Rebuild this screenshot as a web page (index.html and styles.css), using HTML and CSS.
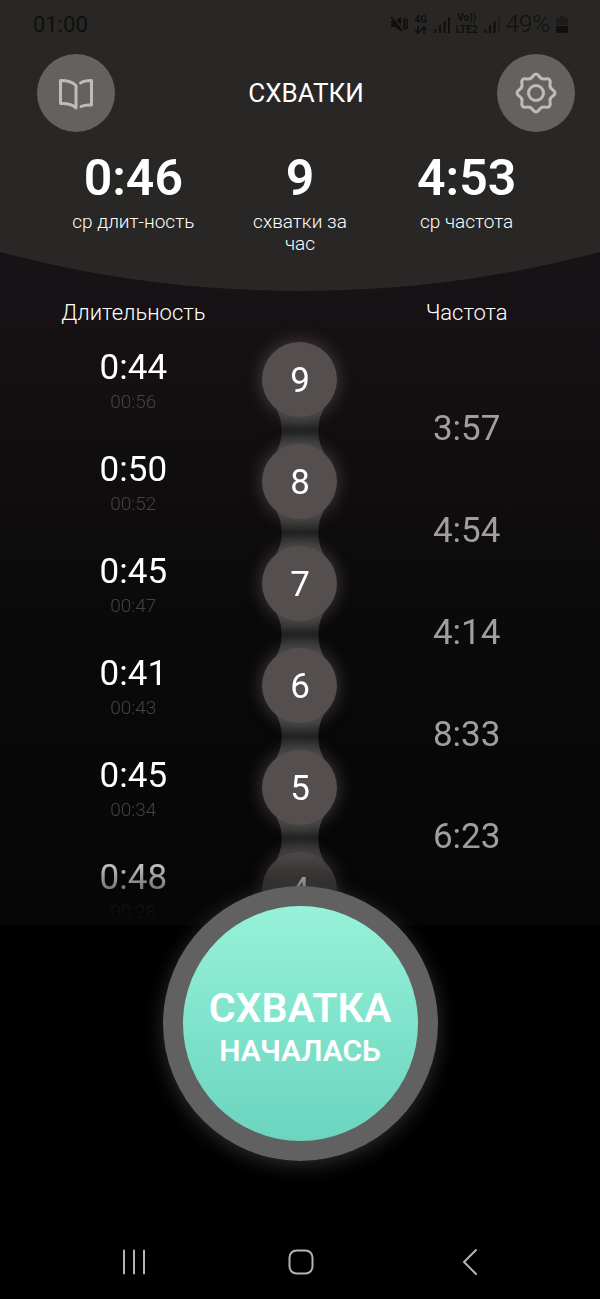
FILE: index.html
```html
<!DOCTYPE html>
<html lang="ru">
<head>
<meta charset="utf-8">
<meta name="viewport" content="width=device-width, initial-scale=1">
<title>Схватки</title>
<link rel="stylesheet" href="styles.css">
</head>
<body>
<svg class="defs" aria-hidden="true">
  <defs>
    <linearGradient id="neck-fill" x1="0" y1="0" x2="0" y2="1">
      <stop offset="0" stop-color="#444443"/>
      <stop offset="0.25" stop-color="#383938"/>
      <stop offset="0.5" stop-color="#1f2120"/>
      <stop offset="0.75" stop-color="#383938"/>
      <stop offset="1" stop-color="#444443"/>
    </linearGradient>
    <path id="neck" d="M8 0C14 10 15.500 16 15.500 25.500S14 41 8 51H60C54 41 52.500 35 52.500 25.500S54 10 60 0Z" fill="url(#neck-fill)"/>
    <path id="tooth" d="M-5.900 -14.300C-2.700 -15.600 -3 -19 0 -19S2.700 -15.600 5.900 -14.300"/>
  </defs>
</svg>
<div class="app">
  <header class="header">
    <div class="status">
      <span class="clock">01:00</span>
      <div class="indicators">
        <svg class="mute" width="18" height="18" viewBox="0 0 18 18" aria-hidden="true"><path d="M1 6h4l6-4v14l-6-4H1z" fill="currentColor"/><path d="M2.500 1l11 14" stroke="#282725" stroke-width="1.500"/><path d="M1 2l11 14" stroke="currentColor" stroke-width="1.500"/><path d="M13.500 3l1.500 2-1.500 2 1.500 2-1.500 2 1.500 2-1.500 2M17 4v10" fill="none" stroke="currentColor" stroke-width="1.500"/></svg>
        <span class="network"><span>4G</span><svg width="14" height="8" viewBox="0 0 14 8" aria-hidden="true"><path d="M4 0v7M1 4l3 3 3-3M10 8V1M7 4l3-3 3 3" fill="none" stroke="currentColor" stroke-width="1.500"/></svg></span>
        <svg width="16" height="17" viewBox="0 0 16 17" aria-hidden="true"><path d="M1.500 17v-4M6 17V9M10.500 17V5M15 17V1" stroke="currentColor" stroke-width="2"/></svg>
        <span class="network"><span>Vo))</span><span>LTE2</span></span>
        <svg width="16" height="17" viewBox="0 0 16 17" aria-hidden="true"><path d="M1.500 17v-4M6 17V9M10.500 17V5" stroke="currentColor" stroke-width="2"/><path d="M15 17V1" stroke="#1e1d1c" stroke-width="2"/></svg>
        <span class="battery">49%</span>
        <svg width="12" height="17" viewBox="0 0 12 17" aria-hidden="true"><path d="M4 0h4v2h2q2 0 2 2v5H0V4q0-2 2-2h2z" fill="#1c1b1a"/><path d="M0 10h12v5q0 2-2 2H2q-2 0-2-2z" fill="currentColor"/></svg>
      </div>
    </div>
    <div class="topbar">
      <button class="round" type="button" aria-label="Справка">
        <svg width="36" height="36" viewBox="-18 -18 36 36" aria-hidden="true"><path d="M-15.500 -12.500Q-5 -12.500 0 -7.500V15Q-5 10 -15.500 10.500ZM4.500 -10Q8 -12.500 15.500 -12.500V12Q9 11.500 5 13.500"/></svg>
      </button>
      <h1 class="title">СХВАТКИ</h1>
      <button class="round" type="button" aria-label="Настройки">
        <svg width="44" height="44" viewBox="-22 -22 44 44" aria-hidden="true"><use href="#tooth"/><use href="#tooth" transform="rotate(45)"/><use href="#tooth" transform="rotate(90)"/><use href="#tooth" transform="rotate(135)"/><use href="#tooth" transform="rotate(180)"/><use href="#tooth" transform="rotate(225)"/><use href="#tooth" transform="rotate(270)"/><use href="#tooth" transform="rotate(315)"/><circle r="7.500"/></svg>
      </button>
    </div>
    <dl class="stats">
      <div class="stat"><dt>ср длит-ность</dt><dd>0:46</dd></div>
      <div class="stat"><dt>схватки за час</dt><dd>9</dd></div>
      <div class="stat"><dt>ср частота</dt><dd>4:53</dd></div>
    </dl>
  </header>

  <table class="log">
    <thead>
      <tr class="heads"><th>Длительность</th><td></td><th>Частота</th></tr>
    </thead>
    <tbody class="rows">
      <tr class="row"><td class="length">0:44<small>00:56</small></td><td class="link"><span class="bead">9</span><svg class="neck" width="68" height="51" aria-hidden="true"><use href="#neck"/></svg></td><td class="interval">3:57</td></tr>
      <tr class="row"><td class="length">0:50<small>00:52</small></td><td class="link"><span class="bead">8</span><svg class="neck" width="68" height="51" aria-hidden="true"><use href="#neck"/></svg></td><td class="interval">4:54</td></tr>
      <tr class="row"><td class="length">0:45<small>00:47</small></td><td class="link"><span class="bead">7</span><svg class="neck" width="68" height="51" aria-hidden="true"><use href="#neck"/></svg></td><td class="interval">4:14</td></tr>
      <tr class="row"><td class="length">0:41<small>00:43</small></td><td class="link"><span class="bead">6</span><svg class="neck" width="68" height="51" aria-hidden="true"><use href="#neck"/></svg></td><td class="interval">8:33</td></tr>
      <tr class="row"><td class="length">0:45<small>00:34</small></td><td class="link"><span class="bead">5</span><svg class="neck" width="68" height="51" aria-hidden="true"><use href="#neck"/></svg></td><td class="interval">6:23</td></tr>
      <tr class="row"><td class="length">0:48<small>00:28</small></td><td class="link"><span class="bead">4</span></td><td class="interval"></td></tr>
    </tbody>
  </table>

  <button class="start" type="button"><strong>СХВАТКА</strong><span>НАЧАЛАСЬ</span></button>

  <nav class="nav">
    <button type="button" aria-label="Последние приложения"><svg width="28" height="28" viewBox="-14 -14 28 28" aria-hidden="true"><path d="M-10 -11.500v23M0 -11.500v23M10 -11.500v23"/></svg></button>
    <button type="button" aria-label="Главный экран"><svg width="28" height="28" viewBox="-14 -14 28 28" aria-hidden="true"><rect x="-11.500" y="-11.500" width="23" height="23" rx="7"/></svg></button>
    <button type="button" aria-label="Назад"><svg width="28" height="28" viewBox="-14 -14 28 28" aria-hidden="true"><path d="M8 -12L-4 0L8 12"/></svg></button>
  </nav>
</div>
</body>
</html>
```
FILE: styles.css
```css
* {
  box-sizing: border-box;
}

body {
  margin: 0;
  background: #000;
  color: #fff;
  font-family: Roboto, "Noto Sans", sans-serif;
}

button {
  margin: 0;
  padding: 0;
  border: 0;
  background: none;
  color: inherit;
  font: inherit;
  cursor: pointer;
}

.defs {
  position: absolute;
  width: 0;
  height: 0;
}

.app {
  display: flex;
  flex-direction: column;
  height: 100vh;
  min-height: 900px;
}

/* Header */

.header {
  position: relative;
  isolation: isolate;
  padding-bottom: 36px;
  background: #171215;
}

.header::before {
  content: "";
  position: absolute;
  inset: 0;
  z-index: -1;
  background: #282725;
  clip-path: ellipse(195% 400% at 50% -300%);
}

.status {
  display: flex;
  align-items: center;
  justify-content: space-between;
  height: 48px;
  padding: 0 32px 0 33px;
  color: #100f0e;
  font-size: 22px;
}

.indicators {
  display: flex;
  align-items: center;
  gap: 6px;
}

.network {
  display: flex;
  flex-direction: column;
  align-items: center;
  font-size: 10px;
  font-weight: 700;
  line-height: 12px;
}

.battery {
  font-size: 24px;
  font-weight: 300;
}

.topbar {
  display: flex;
  align-items: center;
  justify-content: space-between;
  padding: 6px 25px 0 37px;
}

.title {
  margin: 0;
  font-size: 26px;
  font-weight: 400;
}

.round {
  display: grid;
  place-items: center;
  width: 78px;
  height: 78px;
  border-radius: 50%;
  background: #636260;
}

.round svg {
  fill: none;
  stroke: #bdbcbb;
  stroke-width: 3;
  stroke-linecap: round;
  stroke-linejoin: round;
}

.stats,
.heads,
.row {
  display: grid;
  grid-template-columns: repeat(3, 1fr);
  padding: 0 50px;
  text-align: center;
}

.stats {
  margin: 16px 0 0;
}

.stat {
  display: flex;
  flex-direction: column-reverse;
  justify-content: flex-end;
  gap: 3px;
  padding: 0 20px;
}

.stat dt {
  font-size: 19px;
  font-weight: 300;
  line-height: 22px;
}

.stat dd {
  margin: 0;
  font-size: 50px;
  font-weight: 600;
  line-height: 60px;
}

/* Log */

.log {
  display: flex;
  flex: 1;
  flex-direction: column;
  min-height: 0;
  padding-top: 9px;
  background: linear-gradient(#171215, #0b0a0b 50%, #070607);
}

.log thead {
  display: block;
}

.log th,
.log td {
  padding: 0;
}

.heads th {
  font-size: 22px;
  font-weight: 300;
  line-height: 26px;
}

.rows {
  display: block;
  flex: 1;
  min-height: 0;
  padding-top: 16px;
  overflow: hidden;
  -webkit-mask-image: linear-gradient(#000 calc(100% - 80px), transparent);
  mask-image: linear-gradient(#000 calc(100% - 80px), transparent);
}

.row {
  height: 102px;
}

.row .length {
  padding-top: 6px;
  font-size: 35px;
  line-height: 40px;
}

.length small {
  display: block;
  padding-top: 2px;
  color: #464143;
  font-size: 19px;
  font-weight: 300;
  line-height: 24px;
}

.link {
  position: relative;
  isolation: isolate;
  display: flex;
  justify-content: center;
}

.bead {
  width: 75px;
  height: 75px;
  border-radius: 50%;
  background: #544f4e;
  box-shadow: 0 0 16px 2px rgba(112, 102, 102, 0.45);
  font-size: 35px;
  line-height: 78px;
}

.neck {
  position: absolute;
  top: 63px;
  left: calc(50% - 34px);
  z-index: -1;
}

.interval {
  align-self: end;
  color: #a09e9e;
  font-size: 35px;
  line-height: 30px;
}

/* Main action */

.start {
  position: relative;
  display: flex;
  flex-direction: column;
  align-items: center;
  justify-content: center;
  align-self: center;
  flex: none;
  width: 275px;
  height: 275px;
  margin: -39px 0 64px;
  padding-top: 6px;
  border: 20px solid transparent;
  border-radius: 50%;
  background:
    linear-gradient(#96f2d8, #6bd4bf) padding-box,
    linear-gradient(#616161, #616161) border-box;
  box-shadow: 0 4px 20px rgba(130, 130, 130, 0.35);
  font-weight: 600;
}

.start strong {
  font-size: 41px;
  font-weight: 600;
  line-height: 48px;
}

.start span {
  font-size: 30px;
  line-height: 38px;
}

/* System navigation */

.nav {
  display: grid;
  grid-template-columns: repeat(3, 1fr);
  flex: none;
  height: 74px;
  padding: 0 48px 0 50px;
}

.nav button {
  display: grid;
  place-items: center;
}

.nav svg {
  fill: none;
  stroke: #b4b4b4;
  stroke-width: 2;
  stroke-linecap: round;
}
```
